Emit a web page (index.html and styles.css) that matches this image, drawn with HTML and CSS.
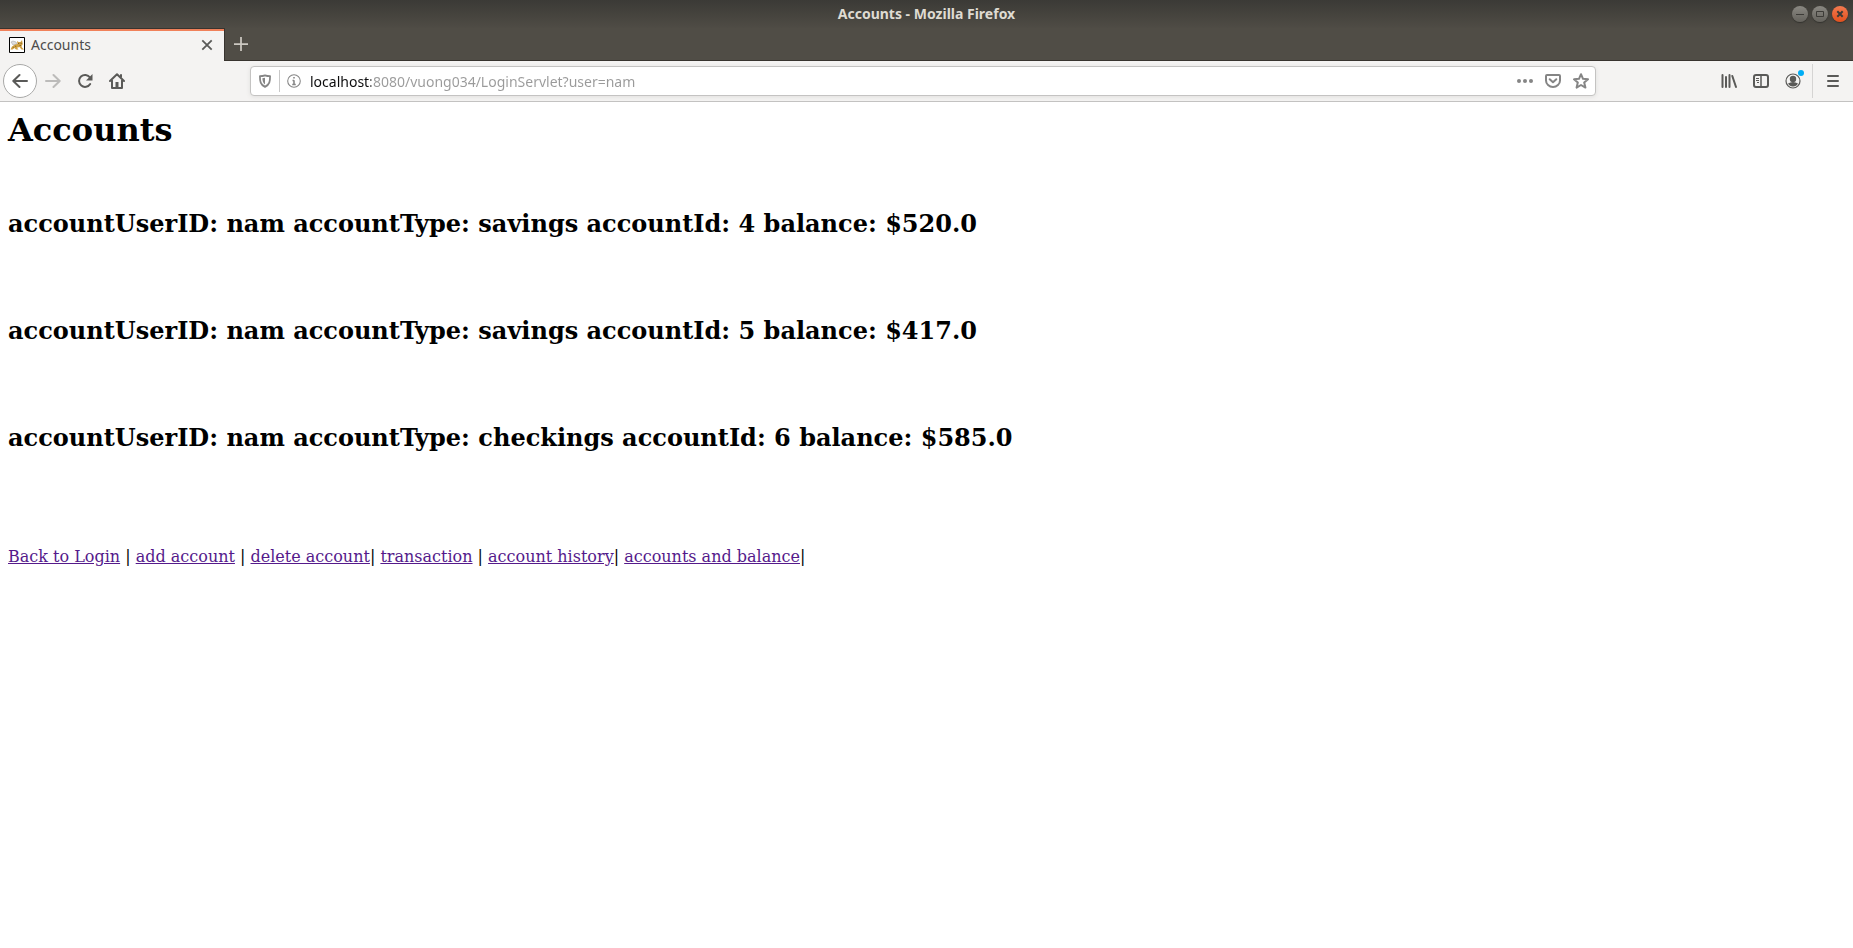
FILE: index.html
```html
<!DOCTYPE html>
<html lang="en">
<head>
<meta charset="utf-8">
<meta name="viewport" content="width=device-width, initial-scale=1">
<title>Accounts</title>
<link rel="stylesheet" href="styles.css">
</head>
<body>
<header class="browser">
  <div class="titlebar">
    <span class="window-title">Accounts - Mozilla Firefox</span>
    <div class="window-controls">
      <button class="win-btn" aria-label="Minimize"><svg viewBox="0 0 16 16"><path d="M4 8.5h8"/></svg></button>
      <button class="win-btn" aria-label="Maximize"><svg viewBox="0 0 16 16"><path d="M4.5 5.5h7v5h-7z"/></svg></button>
      <button class="win-btn win-close" aria-label="Close window"><svg viewBox="0 0 16 16"><path d="M5.3 5.3l5.4 5.4M10.7 5.3l-5.4 5.4"/></svg></button>
    </div>
  </div>
  <div class="tabs">
    <div class="tab">
      <svg class="favicon" viewBox="0 0 16 16" aria-hidden="true">
        <path fill="#fff" stroke="#000" d="M.5.5h15v15H.5z"/>
        <path fill="#ddd" stroke="#aaa" stroke-width=".6" d="M2 5l2-1 3 1 1 2-4 1z"/>
        <path fill="#d0a040" d="M1.500 12.500L3 9.500l3-2 2.500-.5L8 4l1.500 1h2L13 3l.8 4-1.300 2 .5 1.500 2 2h-2.500L10.500 10l-2.500.8 1.500 1.700H7L5.500 11l-2 1.500z"/>
        <path fill="#6b5324" d="M9.200 6h1v1h-1zM11.700 5.800h1v1h-1zM6 8.500l1.500 1-1 .5zM3.500 10.500l1-.8.3 1zM10.500 8h1.500v.7h-1.500z"/>
      </svg>
      <span class="tab-label">Accounts</span>
      <button class="tab-btn" aria-label="Close tab"><svg class="icon" viewBox="0 0 16 16"><path stroke-width="1.800" d="M3.300 3.300l9.400 9.400M12.700 3.300l-9.400 9.400"/></svg></button>
    </div>
    <button class="new-tab" aria-label="New tab"><svg class="icon" viewBox="0 0 16 16"><path stroke-width="2" d="M8 0v16M0 8h16"/></svg></button>
  </div>
  <nav class="toolbar" aria-label="Browser toolbar">
    <div class="tools">
      <button class="tool back" aria-label="Back"><svg class="icon" viewBox="0 0 16 16"><path stroke-width="2" stroke-linecap="round" stroke-linejoin="round" d="M15 8H1.500M7.500 2L1.300 8l6.200 6"/></svg></button>
      <button class="tool" aria-label="Forward" disabled><svg class="icon" viewBox="0 0 16 16"><path stroke-width="2" stroke-linecap="round" stroke-linejoin="round" d="M1 8h13.500M8.500 2l6.200 6-6.200 6"/></svg></button>
      <button class="tool" aria-label="Reload"><svg class="icon" viewBox="0 0 16 16"><path stroke-width="2" stroke-linecap="round" d="M13 4.500A6 6 0 1 0 13.200 11"/><path class="solid" d="M15.500 1v6.500H9z"/></svg></button>
      <button class="tool" aria-label="Home"><svg class="icon" viewBox="0 0 16 16"><path stroke-width="2" stroke-linecap="round" stroke-linejoin="round" d="M1 8l7-6.700L15 8M3 7.500V15h10V7.500M12 2v2"/><path class="solid" d="M6.500 9h3v6h-3z"/></svg></button>
    </div>
    <div class="urlbar">
      <button class="url-btn shield" aria-label="Tracking protection"><svg class="icon small" viewBox="0 0 16 16"><path stroke-width="2" stroke-linejoin="round" d="M8 1.500c2 .7 4 .9 5.800.9 0 6-.5 9.600-5.800 12.300C2.700 12 2.200 8.400 2.200 2.400 4 2.400 6 2.200 8 1.500z"/><path class="solid" d="M8 4.300v7.600C5.600 10 5.200 7.700 5 4.800c1 0 2-.2 3-.5z"/></svg></button>
      <span class="url-sep"></span>
      <button class="url-btn wide" aria-label="Site information"><svg class="icon small" viewBox="0 0 16 16"><circle cx="8" cy="8" r="7.200" stroke-width="1.200"/><path stroke-width="1.800" d="M8 3.300v1.900M8 7v5.200M6.300 7.400H8M6 12h4"/></svg></button>
      <input class="url" type="text" aria-label="Address" value="localhost:8080/vuong034/LoginServlet?user=nam">
      <button class="url-btn wide" aria-label="Page actions"><svg class="icon" viewBox="0 0 16 16"><g class="solid"><circle cx="2" cy="8" r="2"/><circle cx="8" cy="8" r="2"/><circle cx="14" cy="8" r="2"/></g></svg></button>
      <button class="url-btn wide" aria-label="Save to Pocket"><svg class="icon" viewBox="0 0 16 16"><path stroke-width="2" stroke-linejoin="round" d="M2 2h12a1 1 0 0 1 1 1v4.500a7 6.500 0 0 1-14 0V3a1 1 0 0 1 1-1z"/><path stroke-width="2" stroke-linecap="round" stroke-linejoin="round" d="M4.700 6.200L8 9.300l3.300-3.100"/></svg></button>
      <button class="url-btn wide" aria-label="Bookmark this page"><svg class="icon" viewBox="0 0 16 16"><path stroke-width="2" stroke-linejoin="round" d="M8 1.200l2 4.600 5 .5-3.800 3.300 1.200 5L8 12l-4.400 2.600 1.200-5L1 6.300l5-.5z"/></svg></button>
    </div>
    <div class="tools">
      <button class="tool" aria-label="Library"><svg class="icon" viewBox="0 0 16 16"><path stroke-width="2" stroke-linecap="round" d="M1.500 2v12M5 4v10M8.500 2v12"/><path stroke-width="2" stroke-linecap="round" d="M11.300 3l3.700 11"/></svg></button>
      <button class="tool" aria-label="Sidebars"><svg class="icon" viewBox="0 0 16 16"><rect x="1" y="2" width="14" height="12" rx="2" stroke-width="2"/><path stroke-width="1.500" d="M8 2v12"/><path stroke-width="1" d="M3 5.500h3M3 7.500h3M4 9.500h2"/></svg></button>
      <button class="tool account" aria-label="Account"><svg class="icon" viewBox="0 0 16 16"><circle cx="8" cy="8" r="7" stroke-width="1.200"/><g class="solid"><circle cx="8" cy="6" r="3.200"/><path d="M3 10.500Q8 7.500 13 10.500 11.500 13.500 8 13.500T3 10.500z"/></g></svg><span class="badge"></span></button>
      <span class="menu-sep"></span>
      <button class="tool menu" aria-label="Open menu"><svg class="icon" viewBox="0 0 16 16"><path stroke-width="2" stroke-linecap="round" d="M3 3h10M3 8h10M3 13h10"/></svg></button>
    </div>
  </nav>
</header>
<main class="page">
  <h1 class="heading">Accounts</h1>
  <h2 class="account-row">accountUserID: nam accountType: savings accountId: 4 balance: $520.0</h2>
  <h2 class="account-row">accountUserID: nam accountType: savings accountId: 5 balance: $417.0</h2>
  <h2 class="account-row">accountUserID: nam accountType: checkings accountId: 6 balance: $585.0</h2>
  <p class="links"><a href="#login">Back to Login</a> | <a href="#add">add account</a> | <a href="#delete">delete account</a>| <a href="#transaction">transaction</a> | <a href="#history">account history</a>| <a href="#balance">accounts and balance</a>|</p>
</main>
</body>
</html>
```
FILE: styles.css
```css
* { box-sizing: border-box; }

body {
  margin: 0;
  background: #fff;
  color: #000;
  font-family: "DejaVu Serif", serif;
}

button {
  display: flex;
  align-items: center;
  justify-content: center;
  flex: none;
  padding: 0;
  border: 0;
  background: none;
  color: inherit;
}

.browser {
  font-family: "Noto Sans", "Open Sans", sans-serif;
  font-size: 14px;
  color: #5a5a58;
}

.icon {
  display: block;
  width: 16px;
  height: 16px;
  fill: none;
  stroke: currentColor;
}

.icon.small { width: 14px; height: 14px; }
.solid { fill: currentColor; stroke: none; }

.titlebar {
  display: grid;
  grid-template-columns: 1fr auto 1fr;
  align-items: center;
  height: 28px;
  padding: 0 5px;
  background: linear-gradient(#3b3a36, #4f4c45);
}

.window-title {
  grid-column: 2;
  color: #dfdbd2;
  font-size: 14px;
  font-weight: 700;
  line-height: 28px;
}

.window-controls {
  display: flex;
  justify-content: flex-end;
  gap: 4px;
}

.win-btn {
  width: 16px;
  height: 16px;
  border-radius: 50%;
  background: linear-gradient(#8a8882, #64625c);
  box-shadow: 0 1px 1px #33322e;
}

.win-btn svg { width: 16px; height: 16px; fill: none; stroke: #3c3b37; }
.win-close { background: linear-gradient(#f37a50, #e2501d); }
.win-close svg { stroke-width: 2; }

.tabs {
  display: flex;
  height: 33px;
  background: #504d46;
  border-bottom: 1px solid #38342f;
}

.tab {
  display: flex;
  align-items: center;
  width: 225px;
  height: 33px;
  padding: 0 9px 1px;
  background: #f4f3f2;
  border-top: 1px solid #38342f;
  border-right: 1px solid #38342f;
  box-shadow: inset 0 2px #f0815a;
}

.favicon { width: 16px; height: 16px; margin-right: 6px; }
.tab-label { flex: 1; color: #4c4c4c; line-height: 20px; }
.tab-btn { width: 16px; height: 16px; }
.new-tab { width: 32px; height: 32px; color: #cbc8c1; }
.new-tab .icon { width: 14px; height: 14px; }

.toolbar {
  display: flex;
  align-items: center;
  gap: 117px;
  height: 41px;
  padding: 0 3px;
  background: #f4f3f2;
  border-bottom: 1px solid #c3c2c1;
}

.tools { display: flex; align-items: center; }
.tool { width: 32px; height: 32px; }
.tool:disabled { color: #bcbbba; }
.back {
  width: 34px;
  height: 34px;
  background: #fff;
  border: 1px solid #a9a9a8;
  border-radius: 50%;
}

.urlbar {
  display: flex;
  flex: 1;
  align-items: center;
  min-width: 0;
  height: 30px;
  background: #fff;
  border: 1px solid #c4c3c2;
  border-radius: 4px;
  box-shadow: 0 1px 4px #e0dfde;
  color: #858585;
}

.url-btn { width: 28px; height: 28px; }
.url-sep { width: 1px; height: 22px; background: #c8c8c8; }

.url {
  flex: 1;
  min-width: 0;
  padding: 0 2px;
  border: 0;
  outline: 0;
  font: inherit;
  color: #9a9a9a;
  background: linear-gradient(to right, #0c0c0d 63px, #9a9a9a 63px);
  background-clip: text;
  -webkit-background-clip: text;
  -webkit-text-fill-color: transparent;
}

.account { position: relative; }
.badge {
  position: absolute;
  top: 5px;
  right: 5px;
  width: 6px;
  height: 6px;
  border-radius: 50%;
  background: #00adf5;
}

.menu-sep { width: 1px; height: 34px; margin: 0 3px; background: #d5d4d3; }
.menu { width: 34px; }

.page { padding: 9px 8px 8px; }
.heading { margin: 0; font-size: 32px; line-height: 38px; }
.account-row { margin: 61px 0 79px; font-size: 24px; line-height: 28px; }
.account-row + .account-row { margin-top: 79px; }
.links { margin: 95px 0 0; font-size: 16px; line-height: 19px; }
.links a { color: #551a8b; }
```
